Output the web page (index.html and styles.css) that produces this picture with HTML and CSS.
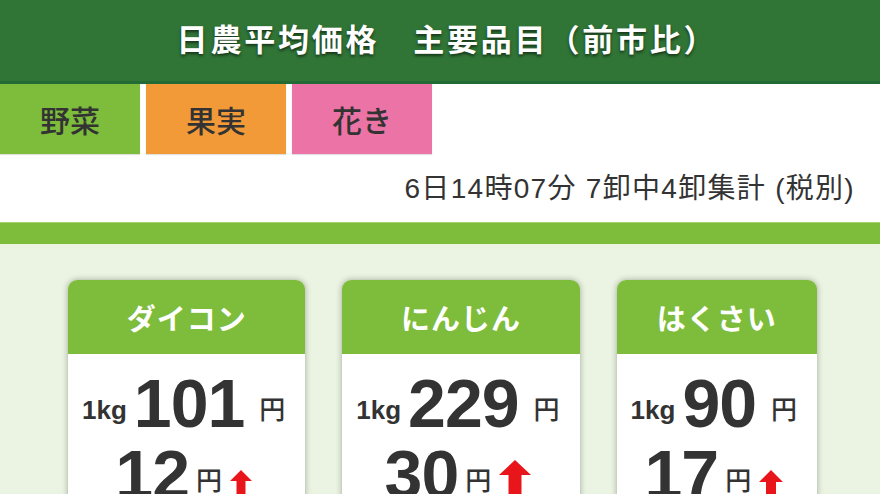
FILE: index.html
```html
<!DOCTYPE html>
<html lang="ja">
<head>
<meta charset="utf-8">
<title>日農平均価格 主要品目(前市比)</title>
<link rel="stylesheet" href="styles.css">
</head>
<body>
<div class="page">
  <header class="topbar">
    <h1 class="title">日農平均価格　主要品目（前市比）</h1>
  </header>
  <nav class="tabs">
    <div class="tab tab-veg">野菜</div>
    <div class="tab tab-fruit">果実</div>
    <div class="tab tab-flower">花き</div>
  </nav>
  <div class="info">6日14時07分 7卸中4卸集計 (税別)</div>
  <div class="bar"></div>
  <main class="board">
    <section class="card">
      <h2 class="card-name">ダイコン</h2>
      <div class="card-body">
        <div class="price"><span class="unit">1kg</span><span class="num">101</span><span class="yen">円</span></div>
        <div class="diff"><span class="num">12</span><span class="yen">円</span><svg class="arrow" width="22" height="26" viewBox="0 0 22 26"><polygon points="11,0 22,11 15.5,11 15.5,26 6.5,26 6.5,11 0,11" fill="#e8161b"/></svg></div>
      </div>
    </section>
    <section class="card">
      <h2 class="card-name">にんじん</h2>
      <div class="card-body">
        <div class="price"><span class="unit">1kg</span><span class="num">229</span><span class="yen">円</span></div>
        <div class="diff"><span class="num">30</span><span class="yen">円</span><svg class="arrow" width="32" height="36" viewBox="0 0 32 36"><polygon points="16,0 32,15 22.5,15 22.5,36 9.5,36 9.5,15 0,15" fill="#e8161b"/></svg></div>
      </div>
    </section>
    <section class="card">
      <h2 class="card-name">はくさい</h2>
      <div class="card-body">
        <div class="price"><span class="unit">1kg</span><span class="num">90</span><span class="yen">円</span></div>
        <div class="diff"><span class="num">17</span><span class="yen">円</span><svg class="arrow" width="24" height="26" viewBox="0 0 24 26"><polygon points="12,0 24,12 17,12 17,26 7,26 7,12 0,12" fill="#e8161b"/></svg></div>
      </div>
    </section>
  </main>
</div>
</body>
</html>
```
FILE: styles.css
```css
html, body {
  margin: 0;
  padding: 0;
}
body {
  width: 880px;
  height: 494px;
  overflow: hidden;
  background: #ffffff;
  font-family: "Liberation Sans", "Noto Sans CJK JP", sans-serif;
  color: #333333;
}
.page {
  display: flex;
  flex-direction: column;
  height: 494px;
}
.topbar {
  height: 81px;
  background: #307436;
  border-bottom: 3px solid #226b34;
  display: flex;
  align-items: center;
  justify-content: center;
  flex: none;
  box-sizing: content-box;
}
.title {
  margin: 0 0 7px 14px;
  font-family: "Noto Sans CJK JP", sans-serif;
  font-size: 31px;
  font-weight: 700;
  letter-spacing: 2.8px;
  color: #ffffff;
  text-shadow: 0 2px 3px rgba(0, 0, 0, 0.55);
  line-height: 1;
}
.tabs {
  display: flex;
  gap: 6px;
  height: 70px;
  flex: none;
}
.tab {
  width: 140px;
  display: flex;
  align-items: center;
  justify-content: center;
  font-family: "Noto Sans CJK JP", sans-serif;
  font-size: 30px;
  font-weight: 500;
  color: #333333;
  box-shadow: 0 1px 1px rgba(0, 0, 0, 0.12);
}
.tab-veg { background: #7dbd3b; }
.tab-fruit { background: #f39a38; }
.tab-flower { background: #ec73a5; }
.info {
  height: 68px;
  flex: none;
  display: flex;
  align-items: center;
  justify-content: flex-end;
  padding: 0 25px 5px 0;
  font-size: 28px;
  letter-spacing: 1.3px;
  color: #333333;
  box-sizing: border-box;
}
.bar {
  height: 21px;
  flex: none;
  background: #7dbd3b;
  border-top: 1px solid #a4d36f;
}
.board {
  flex: 1;
  background: #ebf4e2;
  display: flex;
  align-items: flex-start;
  gap: 37px;
  padding: 36px 0 0 68px;
}
.card {
  background: #ffffff;
  border-radius: 9px 9px 0 0;
  box-shadow: 0 0 6px rgba(0, 0, 0, 0.32);
  overflow: hidden;
  flex: none;
}
.card-name {
  margin: 0;
  height: 74px;
  background: #7dbd3b;
  color: #ffffff;
  display: flex;
  align-items: center;
  justify-content: center;
  font-family: "Noto Sans CJK JP", sans-serif;
  font-size: 29px;
  font-weight: 700;
  letter-spacing: 1px;
}
.card-body {
  padding: 14px 20px 0 14px;
}
.price, .diff {
  line-height: 71px;
  height: 71px;
  text-align: center;
  white-space: nowrap;
}
.num {
  font-size: 68px;
  font-weight: 700;
  letter-spacing: -1px;
  color: #333333;
}
.unit {
  font-size: 26px;
  font-weight: 700;
  line-height: 1;
  vertical-align: 8px;
  margin-right: 7px;
}
.yen {
  font-family: "Noto Sans CJK JP", sans-serif;
  font-size: 26px;
  font-weight: 500;
  line-height: 1;
  vertical-align: 8px;
  margin-left: 15px;
}
.diff .yen {
  vertical-align: 8px;
  margin-left: 7px;
  margin-right: 8px;
}
.arrow {
  vertical-align: 2px;
}
```
